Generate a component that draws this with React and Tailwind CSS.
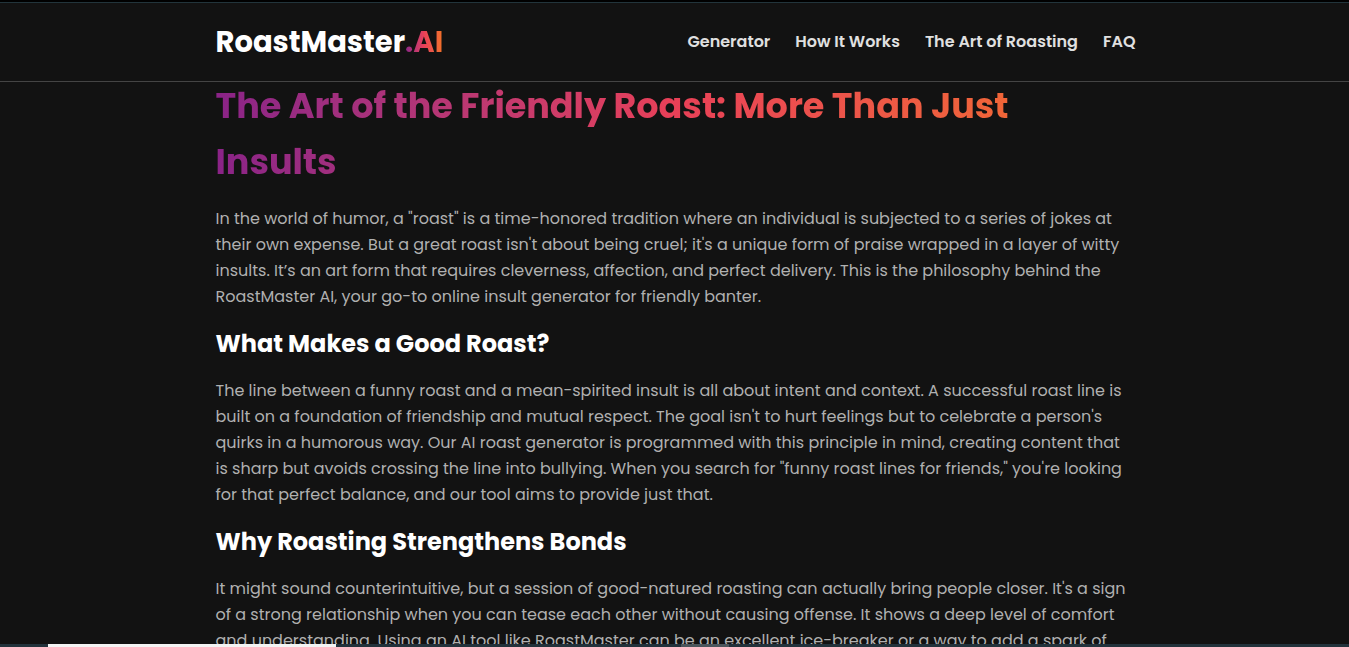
const gradient =
  'bg-linear-to-r from-[#8a2387] via-[#e94057] to-[#f27121] bg-clip-text text-transparent';

const links = [
  { label: 'Generator', href: '#generator' },
  { label: 'How It Works', href: '#how-it-works' },
  { label: 'The Art of Roasting', href: '#art' },
  { label: 'FAQ', href: '#faq' },
];

function Lines({ lines }) {
  return (
    <p className="text-base leading-[26px] text-[#b0b0b0] md:whitespace-nowrap">
      {lines.map((line) => (
        <span key={line} className="md:block">
          {line}{' '}
        </span>
      ))}
    </p>
  );
}

function Subheading({ children }) {
  return <h2 className="my-3 text-2xl leading-[44px] font-bold text-white">{children}</h2>;
}

export default function App() {
  return (
    <div className="flex h-screen flex-col overflow-hidden bg-[#121212] font-[Poppins,Inter,sans-serif]">
      <div className="h-[3px] shrink-0 border-b border-[#22343b] bg-black" />
      <header className="z-10 shrink-0 border-b border-[#444444] pl-0.5">
        <div className="mx-auto flex h-[78px] max-w-[920px] items-center justify-between">
          <a href="#top" className="text-[29px] leading-9 font-bold text-white">
            RoastMaster<span className={gradient}>.AI</span>
          </a>
          <nav className="flex gap-[25px] text-base font-semibold text-[#e0e0e0]">
            {links.map(({ label, href }) => (
              <a key={href} href={href}>
                {label}
              </a>
            ))}
          </nav>
        </div>
      </header>

      <main className="-mt-1 min-h-0 flex-1 overflow-hidden pl-0.5">
        <article id="art" className="mx-auto max-w-[920px]">
          <h1 className={`mb-4 text-[35px] leading-[56px] font-bold ${gradient}`}>
            The Art of the Friendly Roast: More Than Just
            <br />
            Insults
          </h1>
          <Lines
            lines={[
              'In the world of humor, a "roast" is a time-honored tradition where an individual is subjected to a series of jokes at',
              "their own expense. But a great roast isn't about being cruel; it's a unique form of praise wrapped in a layer of witty",
              'insults. It’s an art form that requires cleverness, affection, and perfect delivery. This is the philosophy behind the',
              'RoastMaster AI, your go-to online insult generator for friendly banter.',
            ]}
          />
          <Subheading>What Makes a Good Roast?</Subheading>
          <Lines
            lines={[
              'The line between a funny roast and a mean-spirited insult is all about intent and context. A successful roast line is',
              "built on a foundation of friendship and mutual respect. The goal isn't to hurt feelings but to celebrate a person's",
              'quirks in a humorous way. Our AI roast generator is programmed with this principle in mind, creating content that',
              'is sharp but avoids crossing the line into bullying. When you search for "funny roast lines for friends," you\'re looking',
              'for that perfect balance, and our tool aims to provide just that.',
            ]}
          />
          <Subheading>Why Roasting Strengthens Bonds</Subheading>
          <Lines
            lines={[
              "It might sound counterintuitive, but a session of good-natured roasting can actually bring people closer. It's a sign",
              'of a strong relationship when you can tease each other without causing offense. It shows a deep level of comfort',
              'and understanding. Using an AI tool like RoastMaster can be an excellent ice-breaker or a way to add a spark of',
            ]}
          />
        </article>
      </main>

      <div className="flex h-[3px] shrink-0 bg-[#22323b]">
        <div className="ml-12 w-72 bg-[#f3f3f3]" />
        <div className="ml-[345px] w-12 bg-[#4b565c]" />
      </div>
    </div>
  );
}
